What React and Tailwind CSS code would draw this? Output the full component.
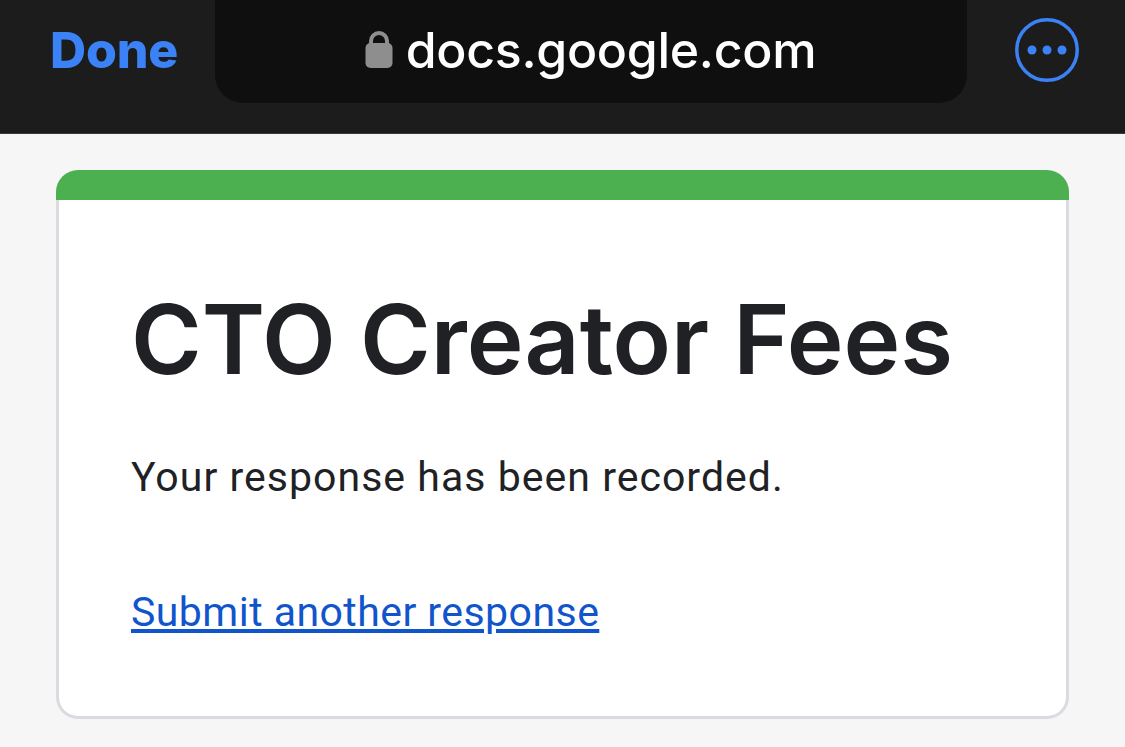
const App = () => {
  return (
    <div className="w-[1125px] h-[747px] overflow-hidden bg-[#f6f6f6] font-['Roboto',sans-serif]">
      <header className="h-[134px] bg-[#1c1c1c] border-b border-[#3a3a3a] flex items-start">
        <div className="w-[215px] h-[99px] shrink-0 flex items-center pl-[50px]">
          <span className="font-['Inter',sans-serif] font-extrabold text-[50px] leading-none tracking-[-0.2px] text-[#3b82f6]">
            Done
          </span>
        </div>

        <div className="w-[752px] h-[103px] shrink-0 bg-[#0f0f0f] rounded-b-[28px] flex items-center justify-center gap-[13px] pb-[4px] pr-[1px]">
          <svg width="28" height="37" viewBox="0 0 28 37" fill="none">
            <path d="M6 14V10a8 8 0 0 1 16 0v4" stroke="#8e8e8e" strokeWidth="4" />
            <rect x="0.5" y="12" width="27" height="25" rx="5" fill="#8e8e8e" />
          </svg>
          <span className="font-['Inter',sans-serif] font-medium text-[50px] leading-none tracking-[-0.3px] text-white">
            docs.google.com
          </span>
        </div>

        <div className="flex-1 h-[100px] flex items-center justify-center pl-[2px]">
          <svg width="64" height="64" viewBox="0 0 64 64" fill="none">
            <circle cx="32" cy="32" r="30.25" stroke="#3b82f6" strokeWidth="3.5" />
            <circle cx="17" cy="32" r="4.5" fill="#3b82f6" />
            <circle cx="32" cy="32" r="4.5" fill="#3b82f6" />
            <circle cx="47" cy="32" r="4.5" fill="#3b82f6" />
          </svg>
        </div>
      </header>

      <main className="pt-[36px] px-[56px]">
        <div className="h-[549px] flex flex-col">
          <div className="h-[30px] bg-[#4caf50] rounded-t-[22px]" />
          <div className="flex-1 bg-white border-[3px] border-t-0 border-[#dadae0] rounded-b-[22px] pl-[72px]">
            <h1 className="mt-[95px] font-['Inter',sans-serif] font-semibold text-[96px] leading-[88px] text-[#202124]">
              CTO Creator Fees
            </h1>
            <p className="mt-[70px] text-[41px] leading-[48px] tracking-[1.03px] text-[#202124]">
              Your response has been recorded.
            </p>
            <a href="#" className="block mt-[87px] w-fit text-[41px] leading-[48px] tracking-[0.45px] text-[#1155cc] underline">
              Submit another response
            </a>
          </div>
        </div>
      </main>
    </div>
  );
};

export default App;
